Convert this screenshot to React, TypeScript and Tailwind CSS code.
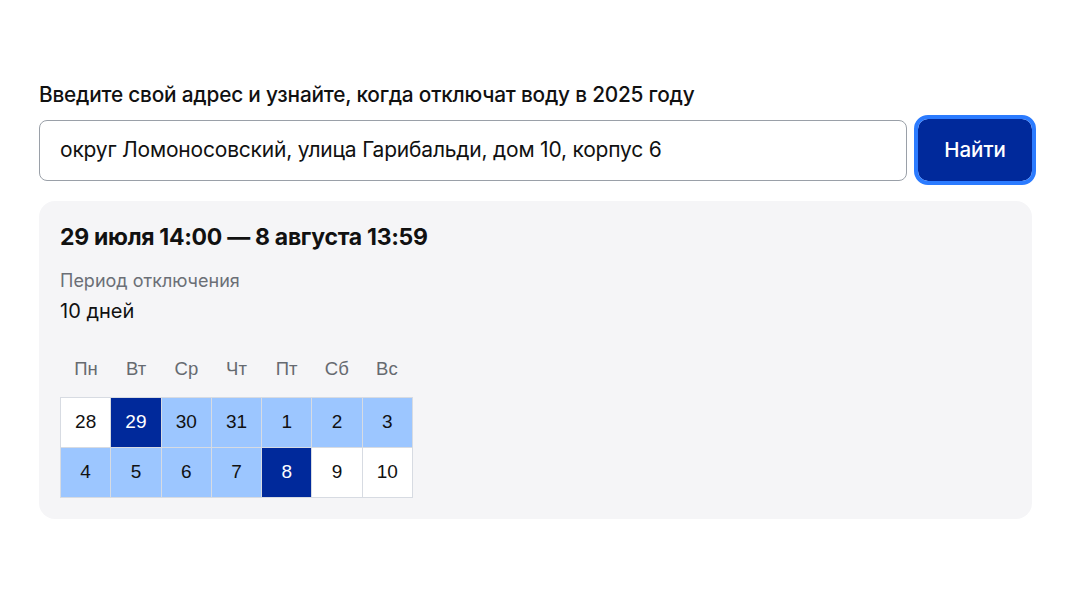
import React from "react";

type Cell = { n: number; kind: "w" | "l" | "d" };

const rows: Cell[][] = [
  [
    { n: 28, kind: "w" },
    { n: 29, kind: "d" },
    { n: 30, kind: "l" },
    { n: 31, kind: "l" },
    { n: 1, kind: "l" },
    { n: 2, kind: "l" },
    { n: 3, kind: "l" },
  ],
  [
    { n: 4, kind: "l" },
    { n: 5, kind: "l" },
    { n: 6, kind: "l" },
    { n: 7, kind: "l" },
    { n: 8, kind: "d" },
    { n: 9, kind: "w" },
    { n: 10, kind: "w" },
  ],
];

const days = ["Пн", "Вт", "Ср", "Чт", "Пт", "Сб", "Вс"];

function cellClass(kind: Cell["kind"]) {
  if (kind === "d") return "bg-[#00299b] text-white";
  if (kind === "l") return "bg-[#9cc6ff] text-[#111]";
  return "bg-white text-[#111]";
}

export default function App() {
  return (
    <div className="min-h-[600px] w-[1066px] bg-white pt-[81px] pl-[39px] font-['Inter',sans-serif]">
      <div className="w-[993px]">
        <div className="text-[20.8px] font-medium leading-[28px] tracking-[-0.2px] text-[#111]">
          Введите свой адрес и узнайте, когда отключат воду в 2025 году
        </div>
        <div className="mt-[10px] flex items-center gap-[11px]">
          <div className="flex h-[61px] flex-1 items-center rounded-[8px] border border-[#9aa0a8] bg-white px-[20px] text-[21px] text-[#111] tracking-[-0.2px]">
            округ Ломоносовский, улица Гарибальди, дом 10, корпус 6
          </div>
          <button className="h-[62px] w-[114px] rounded-[10px] bg-[#00299b] text-[20.5px] font-medium text-white outline-[4px] outline-solid outline-[#2b7bff]">
            Найти
          </button>
        </div>
        <div className="mt-[20px] rounded-[16px] bg-[#f5f5f7] pt-[21px] pl-[21px] pb-[21px]">
          <div className="text-[23px] font-bold leading-[30px] tracking-[-0.3px] text-[#111]">
            29 июля 14:00 — 8 августа 13:59
          </div>
          <div className="mt-[17px] text-[18px] leading-[24px] text-[#6b6f76]">
            Период отключения
          </div>
          <div className="mt-[6px] text-[20px] leading-[24px] text-[#111]">10 дней</div>
          <div className="mt-[36px] grid w-[353px] grid-cols-7 px-px font-['Liberation_Sans',sans-serif] text-[18.5px] text-[#666a70]">
            {days.map((d) => (
              <div key={d} className="text-center leading-[20px]">
                {d}
              </div>
            ))}
          </div>
          <div className="mt-[18px] grid w-[353px] grid-cols-7 gap-px bg-[#d7dbe2] p-px font-['Liberation_Sans',sans-serif] text-[19px]">
            {rows.flat().map((c, i) => (
              <div
                key={i}
                className={`flex h-[49px] items-center justify-center ${cellClass(c.kind)}`}
              >
                {c.n}
              </div>
            ))}
          </div>
        </div>
      </div>
    </div>
  );
}
